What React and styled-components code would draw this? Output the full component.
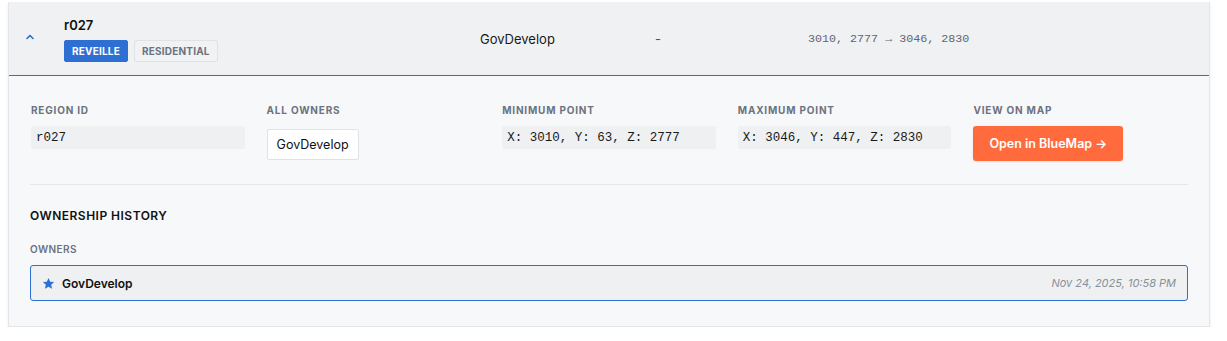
import React, { useState } from "react";
import styled, { createGlobalStyle } from "styled-components";

const GlobalStyle = createGlobalStyle`
  * { box-sizing: border-box; }
  body {
    margin: 0;
    padding: 2px 17px 0 8px;
    background: #ffffff;
    font-family: "Inter", "Noto Sans", sans-serif;
    color: #111827;
  }
`;

const mono = `"Courier New", "Liberation Mono", monospace`;

const owners = [{ name: "GovDevelop", date: "Nov 24, 2025, 10:58 PM", primary: true }];

const App = () => {
  const [open, setOpen] = useState(true);

  return (
    <>
      <GlobalStyle />
      <Card>
        <RowHeader onClick={() => setOpen(!open)}>
          <Chevron open={open}>
            <svg width="12" height="12" viewBox="0 0 24 24" fill="none" stroke="currentColor" strokeWidth="3.2" strokeLinecap="round" strokeLinejoin="round">
              <path d="M6 15l6-6 6 6" />
            </svg>
          </Chevron>
          <NameCell>
            <RegionName>r027</RegionName>
            <Badges>
              <Badge primary>REVEILLE</Badge>
              <Badge>RESIDENTIAL</Badge>
            </Badges>
          </NameCell>
          <OwnerCell>GovDevelop</OwnerCell>
          <DashCell>-</DashCell>
          <CoordsCell>3010, 2777 → 3046, 2830</CoordsCell>
        </RowHeader>
        {open && (
          <Details>
            <InfoGrid>
              <Field>
                <Label>Region ID</Label>
                <CodeBox>r027</CodeBox>
              </Field>
              <Field>
                <Label>All Owners</Label>
                <Chips>
                  <Chip>GovDevelop</Chip>
                </Chips>
              </Field>
              <Field>
                <Label>Minimum Point</Label>
                <CodeBox>X: 3010, Y: 63, Z: 2777</CodeBox>
              </Field>
              <Field>
                <Label>Maximum Point</Label>
                <CodeBox>X: 3046, Y: 447, Z: 2830</CodeBox>
              </Field>
              <Field>
                <Label>View on Map</Label>
                <MapButton>Open in BlueMap →</MapButton>
              </Field>
            </InfoGrid>
            <Divider />
            <SectionTitle>Ownership History</SectionTitle>
            <SubLabel>Owners</SubLabel>
            {owners.map((o) => (
              <HistoryRow key={o.name} current={o.primary}>
                <HistoryName>
                  <svg width="13" height="13" viewBox="0 0 24 24" fill="#2d6fd2">
                    <path d="M12 1.8l3.1 6.9 7.4.7-5.6 5 1.7 7.4L12 17.9l-6.6 3.9 1.7-7.4-5.6-5 7.4-.7z" />
                  </svg>
                  {o.name}
                </HistoryName>
                <HistoryDate>{o.date}</HistoryDate>
              </HistoryRow>
            ))}
          </Details>
        )}
      </Card>
    </>
  );
};

const Card = styled.div`
  border: 1px solid #e3e5e9;
  border-top: none;
  background: #f7f8fa;
  box-shadow: 0 2px 3px rgba(0, 0, 0, 0.08);
`;

const RowHeader = styled.div`
  display: flex;
  align-items: center;
  height: 74px;
  background: #f0f1f3;
  border-bottom: 1px solid #2d6fd2;
  cursor: pointer;
`;

const Chevron = styled.div`
  width: 55px;
  display: flex;
  justify-content: center;
  padding-right: 14px;
  margin-top: -4px;
  color: #2d6fd2;
  transform: ${(p) => (p.open ? "none" : "rotate(180deg)")};
`;

const NameCell = styled.div`
  width: 416px;
  display: flex;
  flex-direction: column;
  gap: 7px;
  margin-top: 1px;
`;

const RegionName = styled.div`
  font-size: 13px;
  font-weight: 600;
  color: #111111;
`;

const Badges = styled.div`
  display: flex;
  gap: 6px;
`;

const Badge = styled.span`
  display: inline-flex;
  align-items: center;
  height: 22px;
  padding: 0 7px;
  border-radius: 2px;
  font-size: 10px;
  font-weight: 700;
  letter-spacing: 0.02em;
  background: ${(p) => (p.primary ? "#2d6fd2" : "#f1f2f4")};
  color: ${(p) => (p.primary ? "#ffffff" : "#6b7280")};
  border: 1px solid ${(p) => (p.primary ? "#2d6fd2" : "#dfe2e6")};
`;

const OwnerCell = styled.div`
  width: 175px;
  font-size: 13px;
  color: #1a1a1a;
`;

const DashCell = styled.div`
  width: 153px;
  font-size: 13px;
  color: #555555;
`;

const CoordsCell = styled.div`
  font-family: ${mono};
  font-size: 11.7px;
  color: #5f6672;
`;

const Details = styled.div`
  padding: 28px 21px 25px 21px;
`;

const InfoGrid = styled.div`
  display: grid;
  grid-template-columns: repeat(5, 1fr);
  gap: 22px;
  padding: 0 1px;
`;

const Field = styled.div`
  display: flex;
  flex-direction: column;
  gap: 10px;
`;

const Label = styled.div`
  font-size: 10px;
  font-weight: 700;
  letter-spacing: 0.08em;
  text-transform: uppercase;
  color: #6b7280;
`;

const CodeBox = styled.div`
  height: 23px;
  display: flex;
  align-items: center;
  padding: 0 5px;
  border-radius: 2px;
  background: #eff0f2;
  font-family: ${mono};
  font-size: 12.5px;
  color: #1a1a1a;
`;

const Chips = styled.div`
  display: flex;
  gap: 6px;
  padding-top: 3px;
`;

const Chip = styled.span`
  display: inline-flex;
  align-items: center;
  height: 31px;
  padding: 0 9px;
  background: #ffffff;
  border: 1px solid #dfe2e6;
  border-radius: 2px;
  font-size: 12.5px;
  color: #111111;
`;

const MapButton = styled.button`
  align-self: flex-start;
  height: 35px;
  padding: 0 16px;
  border: none;
  border-radius: 3px;
  background: #ff6b3d;
  color: #ffffff;
  font-family: "Inter", "Noto Sans", sans-serif;
  font-size: 12.5px;
  font-weight: 600;
  cursor: pointer;
  box-shadow: 0 1px 2px rgba(0, 0, 0, 0.1);
`;

const Divider = styled.hr`
  border: none;
  border-top: 1px solid #e5e7eb;
  margin: 23px 0 0 0;
`;

const SectionTitle = styled.h3`
  margin: 23px 0 0 0;
  font-size: 12px;
  font-weight: 600;
  letter-spacing: 0.04em;
  text-transform: uppercase;
  color: #111111;
`;

const SubLabel = styled.div`
  margin-top: 20px;
  font-size: 10px;
  font-weight: 600;
  letter-spacing: 0.04em;
  text-transform: uppercase;
  color: #6b7280;
`;

const HistoryRow = styled.div`
  margin-top: 10px;
  display: flex;
  align-items: center;
  justify-content: space-between;
  height: 36px;
  padding: 0 11px;
  background: #eff0f2;
  border: 1px solid ${(p) => (p.current ? "#2d6fd2" : "#dfe2e6")};
  border-radius: 3px;
`;

const HistoryName = styled.div`
  display: flex;
  align-items: center;
  gap: 7px;
  font-size: 12px;
  font-weight: 600;
  color: #111111;
`;

const HistoryDate = styled.div`
  font-size: 11px;
  font-style: italic;
  color: #8a9099;
`;

export default App;
